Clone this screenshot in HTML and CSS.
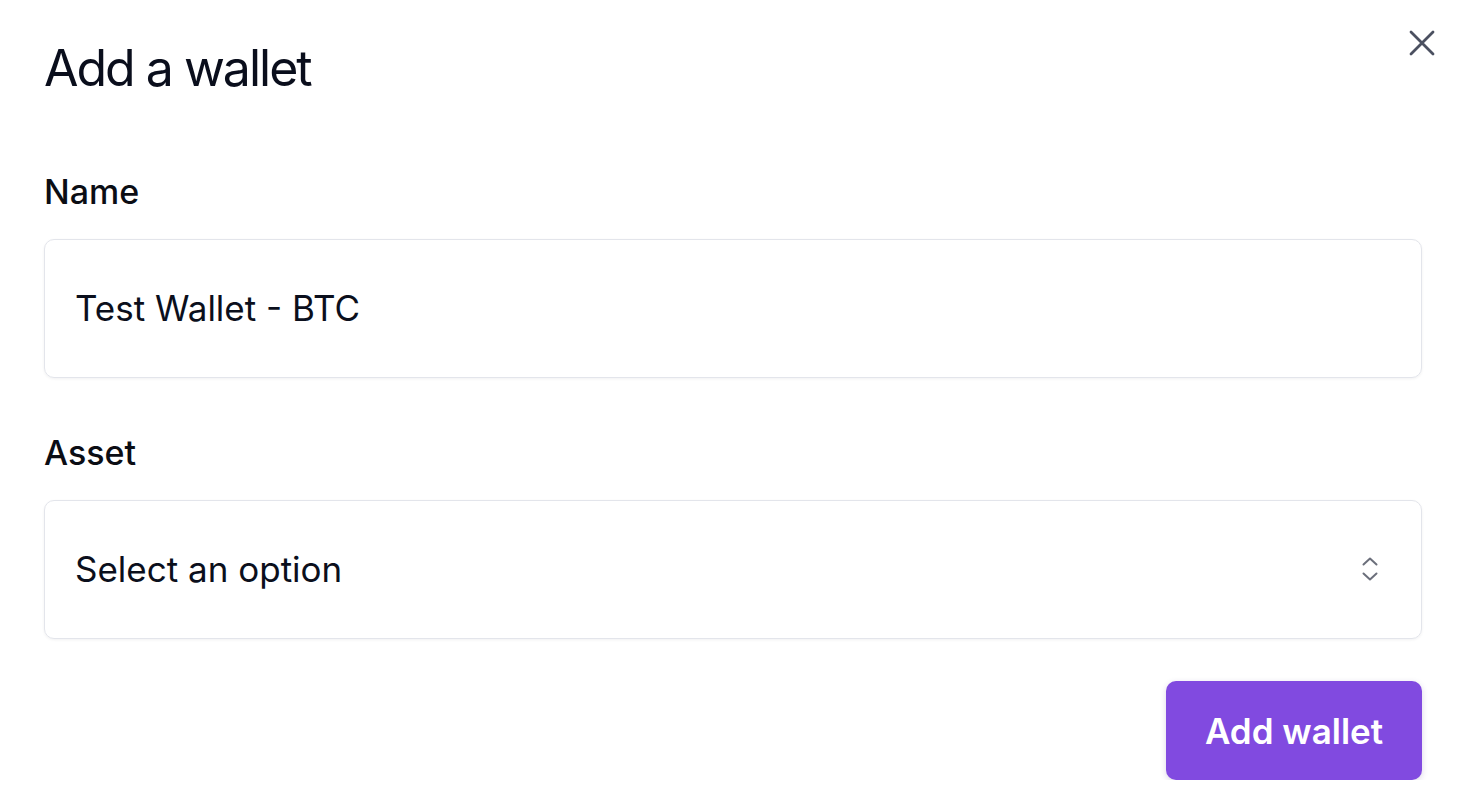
FILE: index.html
```html
<!DOCTYPE html>
<html>
<head>
<meta charset="utf-8">
<link rel="stylesheet" href="styles.css">
</head>
<body>
<div class="dialog">
  <button class="close" aria-label="Close">
    <svg width="26" height="26" viewBox="0 0 26 26"><path d="M2 2 L24 24 M24 2 L2 24" stroke="#4b5060" stroke-width="2.8" stroke-linecap="round" fill="none"/></svg>
  </button>
  <h1 class="title">Add a wallet</h1>
  <div class="field first">
    <label class="label">Name</label>
    <div class="box">Test Wallet - BTC</div>
  </div>
  <div class="field">
    <label class="label">Asset</label>
    <div class="box select">
      <span>Select an option</span>
      <svg class="chev" width="18" height="28" viewBox="0 0 18 28"><path d="M2.5 8.5 L9 2.5 L15.5 8.5 M2.5 17.5 L9 23.5 L15.5 17.5" stroke="#6b6f7b" stroke-width="2" stroke-linecap="round" stroke-linejoin="round" fill="none"/></svg>
    </div>
  </div>
  <div class="actions">
    <button class="primary">Add wallet</button>
  </div>
</div>
</body>
</html>
```
FILE: styles.css
```css
html, body {
  margin: 0;
  padding: 0;
  background: #ffffff;
}
body {
  font-family: Inter, "Noto Sans", sans-serif;
  color: #0b0f1c;
}
.dialog {
  position: relative;
  padding: 38px 35px 0 44px;
}
.close {
  position: absolute;
  top: 30px;
  right: 22px;
  background: none;
  border: 0;
  padding: 0;
  width: 26px;
  height: 26px;
  display: flex;
}
.title {
  margin: 0;
  font-size: 50px;
  line-height: 61px;
  font-weight: 400;
  letter-spacing: -2px;
  color: #0a0e1c;
}
.field {
  display: flex;
  flex-direction: column;
}
.field.first {
  margin-top: 73px;
}
.field + .field {
  margin-top: 55px;
}
.label {
  font-size: 34px;
  line-height: 40px;
  font-weight: 500;
  color: #0b0d14;
  margin-bottom: 27px;
}
.box {
  box-sizing: border-box;
  height: 139px;
  border: 1.5px solid #e3e5eb;
  border-radius: 10px;
  box-shadow: 0 1px 3px rgba(16, 24, 40, 0.06);
  display: flex;
  align-items: center;
  padding: 0 30px;
  font-size: 35px;
  line-height: 43px;
  color: #0b0f1c;
}
.select {
  justify-content: space-between;
  padding-right: 42px;
}
.chev {
  display: block;
}
.actions {
  display: flex;
  justify-content: flex-end;
  margin-top: 42px;
}
.primary {
  font-family: Inter, "Noto Sans", sans-serif;
  background: #814ae0;
  color: #ffffff;
  border: 0;
  border-radius: 10px;
  height: 99px;
  width: 256px;
  font-size: 35px;
  font-weight: 600;
  box-shadow: 0 2px 6px rgba(60, 30, 120, 0.18);
}
```
